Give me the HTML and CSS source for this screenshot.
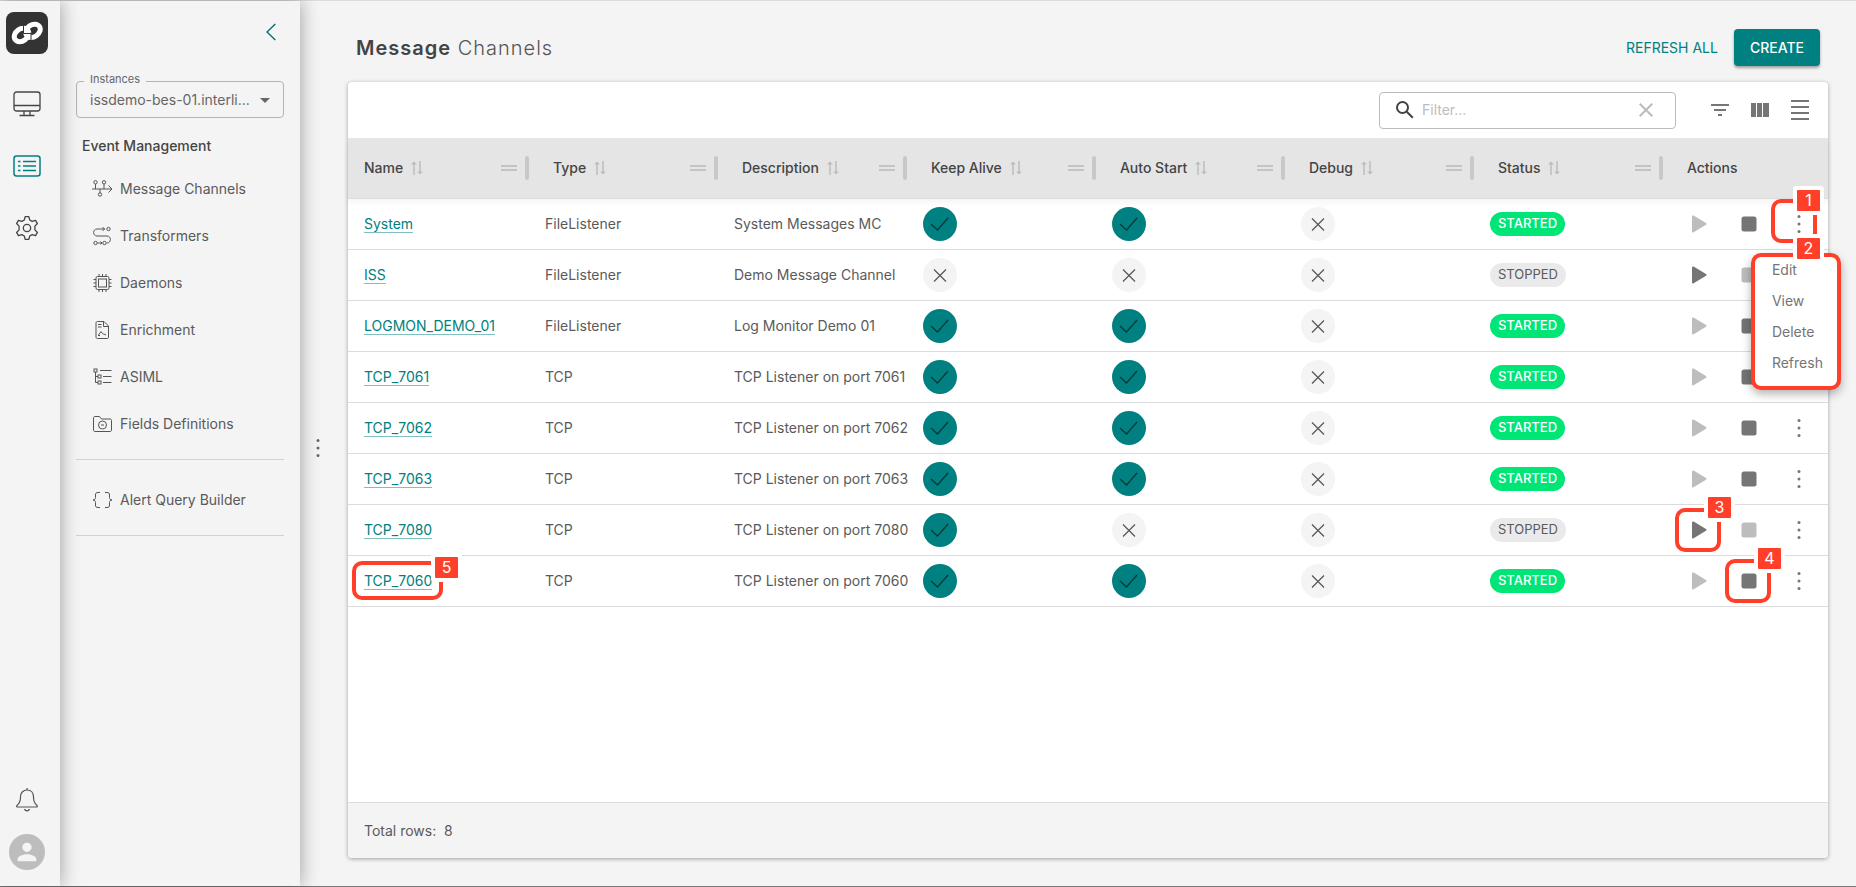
FILE: index.html
```html
<!DOCTYPE html>
<html lang="en">
<head>
<meta charset="utf-8">
<meta name="viewport" content="width=device-width, initial-scale=1">
<title>Message Channels</title>
<link rel="stylesheet" href="styles.css">
</head>
<body>
<svg class="sprite" aria-hidden="true">
  <symbol id="i-sort" viewBox="0 0 12 14"><path d="M3 14V2M9 0v12" fill="none" stroke="currentColor" stroke-width="1.5"/><path d="M0 3.4L3 .4l3 3zM6 10.6l3 3 3-3z" fill="currentColor"/></symbol>
  <symbol id="i-check" viewBox="0 0 34 34"><path d="M8 17l6.500 6L25 11" fill="none" stroke="currentColor" stroke-width="1.3"/></symbol>
  <symbol id="i-cross" viewBox="0 0 34 34"><path d="M11 11.500l12 12M23 11.500l-12 12" fill="none" stroke="currentColor" stroke-width="1.200"/></symbol>
  <symbol id="i-play" viewBox="0 0 18 18"><path d="M2 1.500C2 .5 2.800.2 3.600.6L16 8c.8.500.8 1.200 0 1.700L3.600 17.300C2.800 17.700 2 17.400 2 16.500z" fill="currentColor"/></symbol>
  <symbol id="i-stop" viewBox="0 0 18 18"><rect x="1.500" y="1.500" width="15" height="15" rx="2.500" fill="currentColor"/></symbol>
  <symbol id="i-dots" viewBox="0 0 6 20"><circle cx="3" cy="2.500" r="1.500" fill="currentColor"/><circle cx="3" cy="10" r="1.500" fill="currentColor"/><circle cx="3" cy="17.500" r="1.500" fill="currentColor"/></symbol>
</svg>
<div class="app">
  <nav class="rail" aria-label="Main">
    <a class="logo" href="#" aria-label="Home">
      <svg viewBox="0 0 42 42" width="42" height="42"><g fill="none" stroke="#fff" stroke-width="5"><ellipse cx="15.500" cy="23" rx="7.800" ry="6" transform="rotate(-35 15.500 23)"/><ellipse cx="27" cy="18.800" rx="7.800" ry="6" transform="rotate(-35 27 18.800)"/></g><path d="M17.500 12.500v9M25 20.500v8.500M17.500 21.500H25" fill="none" stroke="#333" stroke-width="1"/></svg>
    </a>
    <a class="rail-link" href="#" aria-label="Monitor"><svg viewBox="0 0 28 26" width="28" height="26" fill="none" stroke="currentColor" stroke-width="1.300"><rect x="1" y="1" width="26" height="19" rx="2.500"/><path d="M1 14.500h26M11 20v4M17 20v4M6.500 24.500h15"/></svg></a>
    <a class="rail-link active" href="#" aria-label="Events"><svg viewBox="0 0 28 22" width="28" height="22" fill="none" stroke="currentColor" stroke-width="1.500"><rect x="1" y="1" width="26" height="20" rx="2.500"/><path d="M10 6.500h13M10 11h13M10 15.500h13M5 6.500h2.500M5 11h2.500M5 15.500h2.500"/></svg></a>
    <a class="rail-link" href="#" aria-label="Settings"><svg viewBox="0 0 24 24" width="26" height="26" fill="none" stroke="currentColor" stroke-width="1.200"><circle cx="12" cy="12" r="3.400"/><path d="M10.300 1.500h3.400l.8 3.100 2.300 1.300 3.100-.9 1.700 2.900L19.300 10.300v3.400l2.300 2.400-1.700 2.900-3.100-.9-2.300 1.300-.8 3.100h-3.400l-.8-3.100-2.300-1.300-3.100.9-1.700-2.900 2.300-2.400v-3.400L2.400 7.900 4.100 5l3.100.9 2.300-1.300z" stroke-linejoin="round"/></svg></a>
    <span class="spacer"></span>
    <button class="bell" type="button" aria-label="Notifications"><svg viewBox="0 0 24 26" width="24" height="26" fill="none" stroke="currentColor" stroke-width="1.200"><path d="M12 1v2M2 18.500c2.500-2 3.500-4 3.500-8.500C5.500 6 8 3 12 3s6.500 3 6.500 7c0 4.500 1 6.500 3.500 8.500.6.600.3 1.500-.5 1.500h-19c-.8 0-1.100-.9-.5-1.500zM9.500 22c.8 2.400 4.200 2.400 5 0"/></svg></button>
    <button class="avatar" type="button" aria-label="Account"><svg viewBox="0 0 24 24" width="28" height="28" fill="currentColor"><path d="M12 12c2.210 0 4-1.790 4-4s-1.790-4-4-4-4 1.790-4 4 1.790 4 4 4zm0 2c-2.670 0-8 1.340-8 4v2h16v-2c0-2.660-5.330-4-8-4z"/></svg></button>
  </nav>

  <aside class="panel">
    <button class="collapse" type="button" aria-label="Collapse"><svg viewBox="0 0 10 18" width="10" height="18" fill="none" stroke="currentColor" stroke-width="1.300"><path d="M9.300 1L1 9l8.300 8"/></svg></button>
    <div class="instance">
      <label for="instance">Instances</label>
      <select id="instance"><option>issdemo-bes-01.interli...</option></select>
      <svg class="caret" viewBox="0 0 10 5" width="10" height="5"><path d="M0 0h10L5 5z" fill="currentColor"/></svg>
    </div>
    <h2>Event Management</h2>
    <ul class="menu">
      <li><a href="#"><svg viewBox="0 0 22 20"><path d="M0 10h20M16.500 6.500L20 10l-3.500 3.500M3.500 5v5M12 5v5M8 10v4"/><circle cx="3.500" cy="3.300" r="1.700"/><circle cx="12" cy="3.300" r="1.700"/><circle cx="8" cy="15.500" r="1.700"/></svg>Message Channels</a></li>
      <li><a href="#"><svg viewBox="0 0 22 20"><path d="M13 3H5C.5 3 .5 10 5 10h10c4.500 0 4.500 7 0 7M10.500 1l2 2-2 2M5.500 17H10M8.500 15.500L10 17l-1.500 1.500"/><circle cx="16.500" cy="3" r="1.700"/><circle cx="3.500" cy="17" r="1.700"/><circle cx="12.500" cy="17" r="1.700"/></svg>Transformers</a></li>
      <li><a href="#"><svg viewBox="0 0 22 20"><rect x="4" y="3.500" width="13" height="13" rx="1.500"/><rect x="6.500" y="6" width="8" height="8"/><path d="M7 1v2.500M10.500 1v2.500M14 1v2.500M7 16.500V19M10.500 16.500V19M14 16.500V19M1.500 6.500H4M1.500 10H4M1.500 13.500H4M17 6.500h2.500M17 10h2.500M17 13.500h2.500"/></svg>Daemons</a></li>
      <li><a href="#"><svg viewBox="0 0 22 20"><path d="M12 1.500H5.500c-1 0-1.500.5-1.500 1.500v14c0 1 .5 1.500 1.500 1.500H15c1 0 1.500-.5 1.500-1.500V6zM11.500 1.500V6.500h5M6 4.500h3.500M6 7h3.500M6.500 15l2.500-3.500 1.500 2 1 .5 2.500 1M6 15.500h2"/></svg>Enrichment</a></li>
      <li><a href="#"><svg viewBox="0 0 22 20"><path d="M3.500 5v10.500H6M3.500 9.500H6M8 3.500h11.500M11 9.500h8.500M11 15.500h8.500"/><rect x="2" y="2" width="3" height="3"/><rect x="6" y="8" width="3" height="3"/><rect x="6" y="14" width="3" height="3"/></svg>ASIML</a></li>
      <li><a href="#"><svg viewBox="0 0 22 20"><path d="M1.500 4c0-1 .5-1.500 1.500-1.500h4.500L9.500 5H18c1 0 1.500.5 1.500 1.500V16c0 1-.5 1.500-1.500 1.500H3c-1 0-1.500-.5-1.500-1.500z"/><circle cx="10.500" cy="11" r="4"/><path d="M9 11h3"/></svg>Fields Definitions</a></li>
    </ul>
    <ul class="menu ruled">
      <li><a href="#"><svg viewBox="0 0 22 20"><path d="M8 2.500H6c-2 0-2.500.8-2.500 2.500v2.500C3.500 9 2.500 10 1 10c1.500 0 2.500 1 2.500 2.500V15c0 1.700.5 2.500 2.500 2.500h2M13 2.500h2c2 0 2.500.8 2.500 2.500v2.500c0 1.500 1 2.500 2.500 2.500-1.500 0-2.500 1-2.500 2.500V15c0 1.700-.5 2.500-2.500 2.500h-2"/></svg>Alert Query Builder</a></li>
    </ul>
  </aside>

  <div class="splitter"><svg width="6" height="20"><use href="#i-dots"/></svg></div>

  <main class="main">
    <header class="head">
      <h1><b>Message</b> Channels</h1>
      <button class="btn text" type="button">REFRESH ALL</button>
      <button class="btn solid" type="button">CREATE</button>
    </header>
    <section class="card">
      <div class="toolbar">
        <div class="filter">
          <svg viewBox="0 0 18 18" width="18" height="18" fill="none" stroke="#424242" stroke-width="2"><circle cx="6.500" cy="6.500" r="5.500"/><path d="M10.800 10.800l6 6"/></svg>
          <input type="text" placeholder="Filter..." aria-label="Filter">
          <button type="button" aria-label="Clear"><svg viewBox="0 0 14 14" width="14" height="14" fill="none" stroke="currentColor" stroke-width="2"><path d="M.7.7l12.600 12.600M13.300.7L.7 13.300"/></svg></button>
        </div>
        <button type="button" aria-label="Filter rows"><svg viewBox="0 0 24 24" width="24" height="24" fill="currentColor"><path d="M10 18h4v-2h-4v2zM3 6v2h18V6H3zm3 7h12v-2H6v2z"/></svg></button>
        <button type="button" aria-label="Columns"><svg viewBox="0 0 24 24" width="24" height="24" fill="currentColor"><path d="M3 5h5v14H3zM9 5h5v14H9zM15 5h6v14h-6z"/></svg></button>
        <button type="button" aria-label="Density"><svg viewBox="0 0 24 24" width="24" height="24" fill="currentColor"><path d="M3 2h18v2H3zM3 8h18v2H3zM3 14h18v2H3zM3 20h18v2H3z"/></svg></button>
      </div>
      <table>
        <colgroup><col class="c"><col class="c"><col class="c"><col class="c"><col class="c"><col class="c"><col class="c"><col></colgroup>
        <thead><tr id="head"></tr></thead>
        <tbody id="rows"></tbody>
      </table>
      <footer>Total rows:&nbsp; 8</footer>
    </section>
  </main>
</div>
<script src="app.js"></script>
</body>
</html>
```
FILE: styles.css
```css
*{box-sizing:border-box}
body{margin:0;font:400 14px/20px Inter,"Liberation Sans",sans-serif;color:#5a5a5a;background:#f4f4f4}
button,input,select{font:inherit;color:inherit}
button{border:0;padding:0;background:none;display:flex;align-items:center;justify-content:center}
a{color:inherit;text-decoration:none}
svg{display:block;flex:none}
.sprite{position:absolute;width:0;height:0}
.app{display:flex;min-height:100vh;border-top:1px solid #dcdcdc;border-bottom:1px solid #777}

.rail{width:60px;flex:none;display:flex;flex-direction:column;align-items:center;padding:11px 6px 16px 0;color:#444;position:relative;z-index:2;background:#f4f4f4;box-shadow:0 0 18px rgba(0,0,0,.36)}
.logo{width:42px;height:42px;border-radius:8px;background:#333;margin-bottom:8px}
.rail-link{height:40px;margin-top:22px;display:flex;align-items:center}
.active{color:#008080}
.spacer{flex:1}
.bell{margin-bottom:21px;color:#555}
.avatar{width:36px;height:36px;border-radius:50%;background:#bdbdbd;color:#f4f4f4}

.panel{width:240px;flex:none;padding:22px 16px;position:relative;z-index:1;background:#f4f4f4;box-shadow:0 0 18px rgba(0,0,0,.36)}
.collapse{margin:0 8px 40px auto;color:#00696b}
.instance{position:relative}
.instance label{position:absolute;left:8px;top:-12px;padding:0 6px;font-size:11px;background:#f4f4f4;color:#666}
.instance select{appearance:none;display:block;width:100%;height:37px;padding:0 30px 0 13px;border:1px solid #b4b4b4;border-radius:4px;background:none;color:#666}
.caret{position:absolute;right:14px;top:17px;color:#666}
.panel h2{margin:18px 6px 9px;font-size:14px;line-height:20px;font-weight:500;color:#444}
.menu{list-style:none;margin:0;padding:0 0 12px;border-bottom:1px solid #d2d2d2}
.menu a{display:flex;align-items:center;gap:6px;height:47px;padding-left:16px}
.menu svg{width:22px;height:20px;fill:none;stroke:#555;stroke-width:1}
.ruled{padding:16px 0 12px}

.splitter{width:36px;flex:none;display:flex;align-items:center;justify-content:center;padding-top:8px;color:#666}
.main{flex:1;min-width:0;display:flex;flex-direction:column;padding:0 28px 28px 12px}
.head{display:flex;align-items:center;gap:8px;height:81px;padding:12px 8px 0;flex:none}
.head h1{flex:1;margin:0;font-size:20px;line-height:28px;font-weight:300;letter-spacing:1px;color:#555}
.head b{font-weight:600;color:#444}
.btn{height:37px;border-radius:4px;padding:0 16px}
.btn.text{color:#008080;padding:0 8px}
.btn.solid{background:#008080;color:#fff;font-weight:500;box-shadow:0 2px 3px rgba(0,0,0,.35)}

.card{flex:1;display:flex;flex-direction:column;background:#fff;border-radius:4px;box-shadow:0 1px 4px rgba(0,0,0,.35)}
.toolbar{display:flex;align-items:center;justify-content:flex-end;gap:16px;height:56px;padding:0 16px;color:#757575}
.filter{display:flex;align-items:center;width:297px;height:37px;margin-right:16px;padding:0 22px 0 16px;gap:8px;border:1px solid #bbb;border-radius:4px}
.filter input{flex:1;min-width:0;border:0;padding:0;outline:0;background:none}
.filter input::placeholder{color:#bdbdbd;opacity:1}
.filter button{color:#bbb}

table{width:100%;table-layout:fixed;border-collapse:separate;border-spacing:0}
.c{width:12.77%}
thead tr{box-shadow:0 4px 6px rgba(0,0,0,.04)}
th{height:61px;padding:0 8px 0 16px;text-align:left;font-weight:500;color:#444;background:#e5e5e5;border-bottom:1px solid #dcdcdc}
.th{display:flex;align-items:center;gap:8px;color:#bdbdbd}
.th span:first-child{color:#444}
.grip{width:16px;height:6px;margin-left:auto;border:solid #c4c4c4;border-width:2px 0}
.sep{width:4px;height:24px;border-radius:2px;background:#c8c8c8}
td{height:51px;padding:0 8px;white-space:nowrap;border-bottom:1px solid #dcdcdc}
td:first-child{padding-left:16px}
td:first-child a{position:relative;display:inline-block;color:#008080;line-height:17px;border-bottom:1px solid #7fbfbf}
.flag{display:block;width:34px;height:34px;border-radius:50%}
.yes{background:#008080;color:#06383a}
.no{background:#f4f4f4;color:#555}
.chip{display:inline-block;height:24px;line-height:23px;padding:0 8px;border-radius:12px;font-size:13px}
.started{background:#00e676;color:#fff;font-weight:500}
.stopped{background:#eaeaea}
.actions{display:flex;gap:10px;color:#757575}
.actions button{position:relative;width:40px;height:40px}
.actions button:disabled{color:#bdbdbd}
footer{margin-top:auto;height:56px;padding:0 16px;display:flex;align-items:center;border-top:1px solid #dcdcdc;border-radius:0 0 4px 4px;background:#f4f4f4}

.note{position:absolute;z-index:3;width:46px;height:44px;left:-4px;top:-2px;border:4px solid #ff3f2a;border-radius:10px}
.note i,.popup i{position:absolute;right:-14px;top:-15px;width:23px;height:21px;font:400 16px/21px Inter,sans-serif;text-align:center;color:#fff;background:#ff3f2a;border-radius:1px;box-shadow:0 0 0 4px #fff}
.note.more{left:-8px;top:-5px}
.note.more i{right:-7px;top:-13px}
.note.name{left:-12px;top:-11px;width:91px;height:39px}
.note.name i{right:-19px;top:-8px}
.popup{position:absolute;z-index:4;right:-22px;top:49px;display:grid;gap:5px;align-content:start;margin:0;list-style:none;width:90px;height:137px;padding:0 0 0 17px;border:4px solid #ff3f2a;border-radius:10px;background:#fff;box-shadow:0 4px 10px rgba(0,0,0,.3)}
.popup i{right:17px;top:-19px}
.popup button{width:auto;height:26px}
.anchor{position:relative}
```
FILE: app.js
```js
const icon = (name, w, h) => `<svg width="${w}" height="${h}"><use href="#i-${name}"/></svg>`;
const columns = ["Name", "Type", "Description", "Keep Alive", "Auto Start", "Debug", "Status"];
const rows = [
  ["System", "FileListener", "System Messages MC", 1, 1, 1],
  ["ISS", "FileListener", "Demo Message Channel", 0, 0, 0],
  ["LOGMON_DEMO_01", "FileListener", "Log Monitor Demo 01", 1, 1, 1],
  ["TCP_7061", "TCP", "TCP Listener on port 7061", 1, 1, 1],
  ["TCP_7062", "TCP", "TCP Listener on port 7062", 1, 1, 1],
  ["TCP_7063", "TCP", "TCP Listener on port 7063", 1, 1, 1],
  ["TCP_7080", "TCP", "TCP Listener on port 7080", 1, 0, 0],
  ["TCP_7060", "TCP", "TCP Listener on port 7060", 1, 1, 1]
];
document.getElementById("head").innerHTML = columns.map(c =>
  `<th><div class="th"><span>${c}</span>${icon("sort", 12, 14)}<span class="grip"></span><span class="sep"></span></div></th>`
).join("") + "<th>Actions</th>";

const flag = on => `<span class="flag ${on ? "yes" : "no"}">${icon(on ? "check" : "cross", 34, 34)}</span>`;
const note = (n, kind = "") => `<span class="note ${kind}"><i>${n}</i></span>`;
const popup = `<ul class="popup">${["Edit", "View", "Delete", "Refresh"].map(t => `<li><button type="button">${t}</button></li>`).join("")}<i>2</i></ul>`;

document.getElementById("rows").innerHTML = rows.map(([name, type, text, keep, auto, on], r) => `<tr>
  <td><a href="#">${name}${r === 7 ? note(5, "name") : ""}</a></td><td>${type}</td><td>${text}</td>
  <td>${flag(keep)}</td><td>${flag(auto)}</td><td>${flag(0)}</td>
  <td><span class="chip ${on ? "started" : "stopped"}">${on ? "STARTED" : "STOPPED"}</span></td>
  <td><div class="actions">
    <button type="button" aria-label="Start" ${on ? "disabled" : ""}>${icon("play", 18, 18)}${r === 6 ? note(3) : ""}</button>
    <button type="button" aria-label="Stop" ${on ? "" : "disabled"}>${icon("stop", 18, 18)}${r === 7 ? note(4) : ""}</button>
    <div class="anchor"><button type="button" aria-label="More">${icon("dots", 6, 20)}${r === 0 ? note(1, "more") : ""}</button>${r === 0 ? popup : ""}</div>
  </div></td></tr>`).join("");
```
